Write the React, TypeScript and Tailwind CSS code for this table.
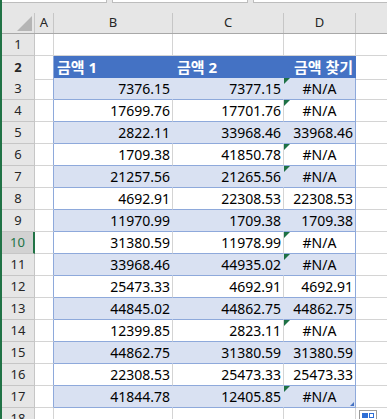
import React from 'react';

type Row = { b: string; c: string; d: string };

const rows: Row[] = [
  { b: '7376.15', c: '7377.15', d: '#N/A' },
  { b: '17699.76', c: '17701.76', d: '#N/A' },
  { b: '2822.11', c: '33968.46', d: '33968.46' },
  { b: '1709.38', c: '41850.78', d: '#N/A' },
  { b: '21257.56', c: '21265.56', d: '#N/A' },
  { b: '4692.91', c: '22308.53', d: '22308.53' },
  { b: '11970.99', c: '1709.38', d: '1709.38' },
  { b: '31380.59', c: '11978.99', d: '#N/A' },
  { b: '33968.46', c: '44935.02', d: '#N/A' },
  { b: '25473.33', c: '4692.91', d: '4692.91' },
  { b: '44845.02', c: '44862.75', d: '44862.75' },
  { b: '12399.85', c: '2823.11', d: '#N/A' },
  { b: '44862.75', c: '31380.59', d: '31380.59' },
  { b: '22308.53', c: '25473.33', d: '25473.33' },
  { b: '41844.78', c: '12405.85', d: '#N/A' },
];

const gridCols = 'grid grid-cols-[33px_19px_119px_111px_72px_1fr]';
const cellFont = { fontFamily: '"Noto Sans", "Noto Sans CJK KR", sans-serif' };

const RowHeader: React.FC<{ n: number; selected?: boolean }> = ({ n, selected }) =>
  selected ? (
    <div className="flex items-center justify-center bg-[#d2d2d2] border-b border-[#c6c6c6] border-r-2 border-r-[#217346] text-[13px] text-[#217346]">
      {n}
    </div>
  ) : (
    <div className="flex items-center justify-center bg-[#e6e6e6] border-b border-r border-[#c6c6c6] text-[13px] text-[#262626]">
      {n}
    </div>
  );

const ErrorMark = () => (
  <svg className="absolute left-0 top-0" width="6" height="6" viewBox="0 0 6 6">
    <polygon points="0,0 6,0 0,6" fill="#1e7145" />
  </svg>
);

export default function App() {
  return (
    <div
      className="h-[419px] w-[387px] overflow-hidden bg-[#e6e6e6] border-l-2 border-[#217346] relative"
      style={{ fontFamily: '"Noto Sans", "Noto Sans CJK KR", sans-serif' }}
    >
      {/* formula bar edge */}
      <div className="flex h-[3px] gap-[5px]">
        <div className="w-[105px] bg-white border-r border-b border-[#bdbdbd]" />
        <div className="w-[136px] bg-white border-x border-b border-[#bdbdbd]" />
        <div className="flex-1 bg-white border-l border-b border-[#bdbdbd]" />
      </div>
      <div className="h-[10px]" />

      {/* column headers */}
      <div className={`${gridCols} h-[21px] border-b border-[#a8a8a8] text-[13px] text-[#262626]`}>
        <div className="relative border-r border-[#c6c6c6]">
          <svg className="absolute right-[2px] bottom-[2px]" width="15" height="15" viewBox="0 0 15 15">
            <polygon points="15,0 15,15 0,15" fill="#b5b5b5" />
          </svg>
        </div>
        <div className="flex items-center justify-center border-r border-[#c6c6c6]">A</div>
        <div className="flex items-center justify-center border-r border-[#c6c6c6]">B</div>
        <div className="flex items-center justify-center border-r border-[#c6c6c6]">C</div>
        <div className="flex items-center justify-center border-r border-[#c6c6c6]">D</div>
        <div />
      </div>

      {/* row 1 */}
      <div className={`${gridCols} h-[22px] bg-white`}>
        <RowHeader n={1} />
        <div className="border-r border-b border-[#d4d4d4]" />
        <div className="border-r border-b border-[#d4d4d4]" />
        <div className="border-r border-b border-[#d4d4d4]" />
        <div className="border-r border-b border-[#d4d4d4]" />
        <div className="border-b border-[#d4d4d4]" />
      </div>

      {/* row 2 : table header */}
      <div className={`${gridCols} h-[22px] bg-white text-[15px] font-bold text-white`}>
        <RowHeader n={2} />
        <div className="border-r border-b border-r-[#8ea9db] border-b-[#d4d4d4]" />
        <div className="flex items-center pl-[3px] bg-[#4472c4] border-b border-[#4472c4]" style={cellFont}>
          금액 1
        </div>
        <div className="flex items-center pl-[4px] bg-[#4472c4] border-b border-[#4472c4]" style={cellFont}>
          금액 2
        </div>
        <div className="flex items-center justify-end pr-[3px] bg-[#4472c4] border-b border-[#4472c4] whitespace-nowrap" style={cellFont}>
          금액 찾기
        </div>
        <div className="border-b border-[#d4d4d4]" />
      </div>

      {/* data rows */}
      {rows.map((r, i) => {
        const n = i + 3;
        const band = i % 2 === 0;
        const bg = band ? 'bg-[#d9e1f2]' : 'bg-white';
        const inner = band ? 'border-r-[#d9e1f2]' : 'border-r-[#d4d4d4]';
        const isErr = r.d === '#N/A';
        return (
          <div key={n} className={`${gridCols} h-[22px] bg-white text-[14px] text-black`}>
            <RowHeader n={n} selected={n === 10} />
            <div className="border-r border-b border-r-[#8ea9db] border-b-[#d4d4d4]" />
            <div className={`flex items-center justify-end pr-[2px] border-r border-b border-b-[#8ea9db] ${inner} ${bg}`}>
              {r.b}
            </div>
            <div className={`flex items-center justify-end pr-[2px] border-r border-b border-b-[#8ea9db] ${inner} ${bg}`}>
              {r.c}
            </div>
            <div
              className={`relative flex items-center ${isErr ? 'justify-center' : 'justify-end pr-[2px]'} border-r border-b border-[#8ea9db] ${bg}`}
            >
              {isErr && <ErrorMark />}
              {r.d}
              {n === 17 && (
                <svg className="absolute right-[1px] bottom-[1px]" width="4" height="4" viewBox="0 0 4 4">
                  <polygon points="4,0 4,4 0,4" fill="#4472c4" />
                </svg>
              )}
            </div>
            <div className="border-b border-[#d4d4d4]" />
          </div>
        );
      })}

      {/* row 18 */}
      <div className={`${gridCols} h-[22px] bg-white`}>
        <RowHeader n={18} />
        <div className="border-r border-b border-[#d4d4d4]" />
        <div className="border-r border-b border-[#d4d4d4]" />
        <div className="border-r border-b border-[#d4d4d4]" />
        <div className="border-r border-b border-[#d4d4d4]" />
        <div className="relative border-b border-[#d4d4d4]">
          <div className="absolute left-[3px] top-[2px] w-[18px] h-[14px] bg-white border border-[#9a9a9a] p-[2px]">
            <div className="flex gap-[1px]">
              <div className="w-[7px] h-[5px] bg-[#2f6fd6]" />
              <div className="w-[5px] h-[5px] border border-[#2f6fd6]" />
            </div>
          </div>
        </div>
      </div>
    </div>
  );
}
